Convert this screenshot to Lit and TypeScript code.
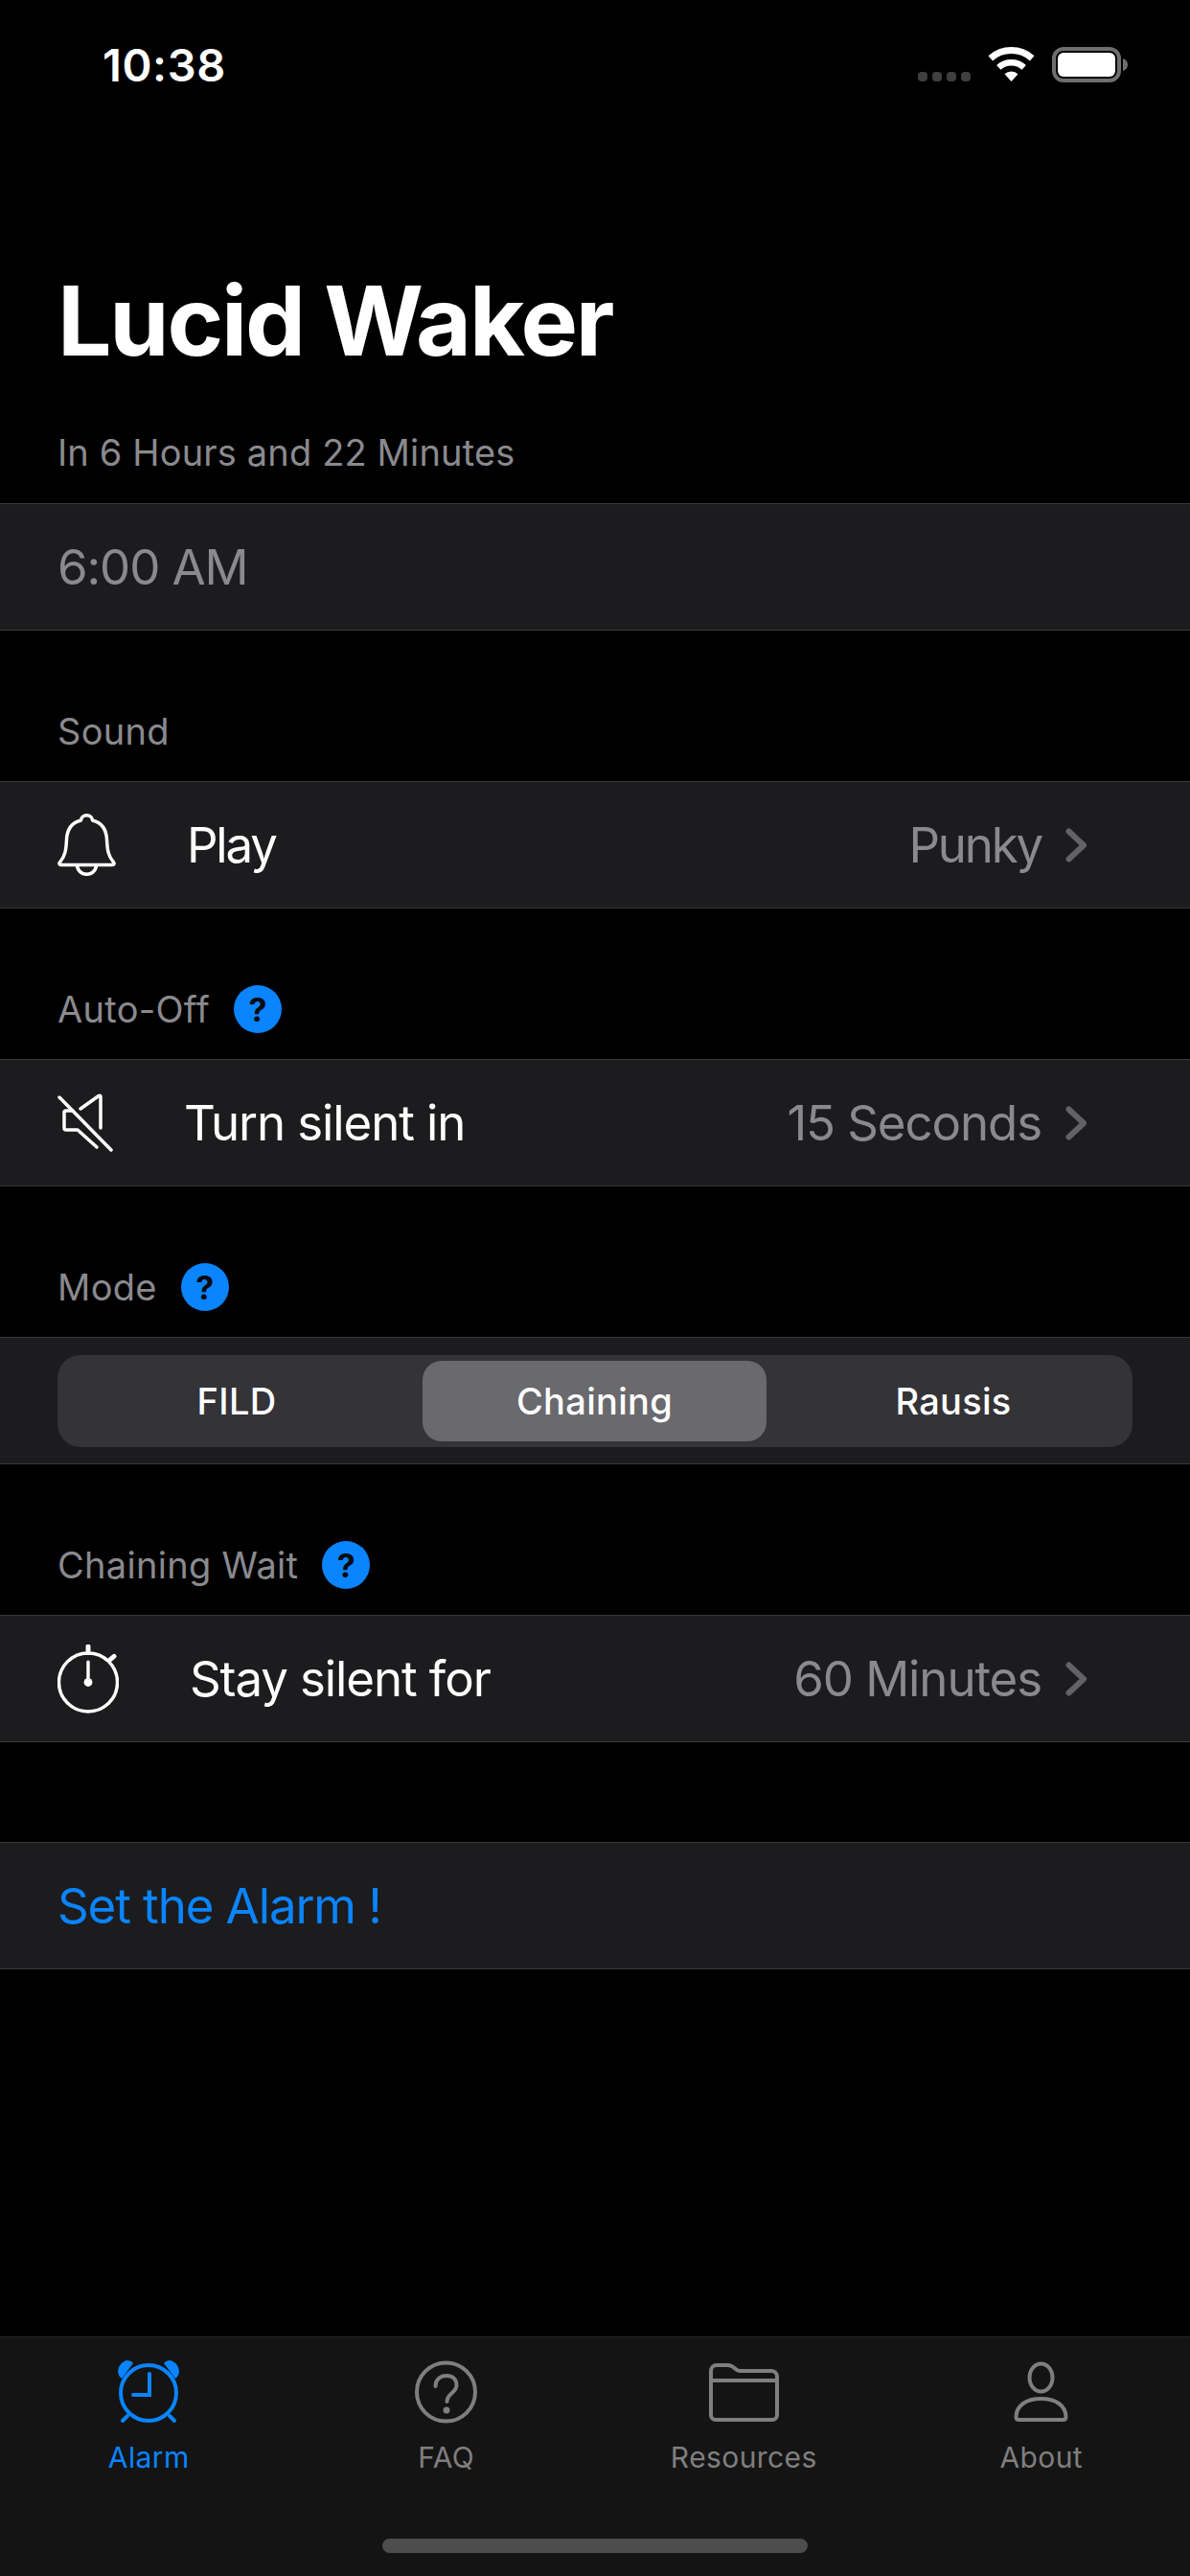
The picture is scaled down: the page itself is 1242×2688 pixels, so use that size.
import { LitElement, html, css, svg } from 'lit';
import { customElement } from 'lit/decorators.js';

const bell = html`<svg class="ico" width="61" height="65" viewBox="0 0 61 65"><g fill="none" stroke="#fff" stroke-width="3.5" stroke-linejoin="round">
  <path d="M30.5 1.8c-3.4 0-5.8 2.4-6 5.2C14.500 9.500 10 17 9.500 27 9 38 8 44 3 50c-1.800 2-1.300 3.500 1 3.500h53c2.300 0 2.800-1.500 1-3.500-5-6-6-12-6.500-23C51 17 46.500 9.500 36.500 7c-.2-2.800-2.600-5.200-6-5.200z"/>
  <path d="M20.500 54c.5 5.800 5 9.300 10 9.300s9.500-3.500 10-9.300"/></g></svg>`;

const mute = html`<svg class="ico" width="58" height="61" viewBox="0 0 58 61"><g fill="none" stroke="#fff" stroke-width="3.500" stroke-linecap="round" stroke-linejoin="round">
  <path d="M2 4l54 55"/>
  <path d="M16 18H9q-2 0-2 2v16q0 2 2 2h12l20 18"/>
  <path d="M24 16L43 2.500q2-1 2 1V36"/></g></svg>`;

const watch = html`<svg class="ico" width="64" height="72" viewBox="0 0 65 72"><g fill="none" stroke="#fff" stroke-width="3.500" stroke-linecap="round">
  <circle cx="32.500" cy="39.500" r="31"/>
  <path d="M32.500 1.500V8" stroke-width="5"/>
  <path d="M55 16l5-4" stroke-width="5"/>
  <path d="M32.500 18V38"/></g><circle cx="32.500" cy="39.500" r="4.500" fill="#fff"/></svg>`;

const tabIcons = {
  alarm: svg`<g fill="none" stroke="#0a84ff" stroke-width="4" stroke-linecap="round">
    <circle cx="36" cy="37" r="29"/>
    <path d="M37 17V39H20"/><path d="M14 61l-5 5"/><path d="M58 61l5 5"/></g>
    <path d="M8 22C1 17 4 6 13 3c3 0 6 1 7 3z" fill="#0a84ff"/>
    <path d="M64 22C71 17 68 6 59 3c-3 0-6 1-7 3z" fill="#0a84ff"/>`,
  faq: svg`<circle cx="36.500" cy="36" r="30.500" fill="none" stroke="#7f7f7f" stroke-width="4"/>
    <path d="M25.500 30c0-7 5-11 11.500-11s10.500 4 10.500 10c0 8-10 8-10 17" fill="none" stroke="#7f7f7f" stroke-width="4" stroke-linecap="round"/>
    <circle cx="37" cy="55" r="3.500" fill="#7f7f7f"/>`,
  folder: svg`<g fill="none" stroke="#7f7f7f" stroke-width="4" stroke-linejoin="round">
    <path d="M2 14a6 6 0 0 1 6-6h12c6 0 7 5.500 12 6h33a6 6 0 0 1 6 6v40a5 5 0 0 1-5 5H7a5 5 0 0 1-5-5z"/>
    <path d="M2 24h69"/></g>`,
  person: svg`<g fill="none" stroke="#7f7f7f" stroke-width="4" stroke-linejoin="round">
    <ellipse cx="36.500" cy="21" rx="12" ry="14.500"/>
    <path d="M10.500 62c0-12 11-19 26-19s26 7 26 19c0 2-1 3-3 3h-46c-2 0-3-1-3-3z"/></g>`,
};

@customElement('app-root')
export class AppRoot extends LitElement {
  static styles = css`
    :host {
      display: block;
      width: 1242px;
      height: 2688px;
      background: #000;
      color: #fff;
      font-family: Inter, 'Liberation Sans', sans-serif;
    }

    .page {
      display: flex;
      flex-direction: column;
      height: 100%;
    }

    .status {
      display: flex;
      align-items: flex-start;
      height: 140px;
      padding: 49px 65px 0 107px;
      box-sizing: border-box;
    }

    .time {
      font-size: 47px;
      line-height: 37px;
      font-weight: 600;
      letter-spacing: 0.6px;
      margin-right: auto;
    }

    .title {
      margin: 135px 0 0;
      padding: 0 60px;
      font-size: 100px;
      line-height: 120px;
      font-weight: 700;
      letter-spacing: -2.2px;
    }

    .subtitle {
      font-size: 38px;
      line-height: 46px;
      letter-spacing: 0.15px;
      color: #8a8a8e;
      padding: 0 60px;
      margin: 54px 0 30px;
    }

    .row {
      display: flex;
      align-items: center;
      height: 133px;
      box-sizing: border-box;
      padding: 0 60px;
      background: #1c1c1e;
      border-top: 1px solid #38383a;
      border-bottom: 1px solid #38383a;
      font-size: 51px;
      letter-spacing: -1.1px;
    }

    .row .ico {
      margin-right: 74px;
      flex: none;
    }

    .tight {
      letter-spacing: -2.2px;
    }

    .value {
      margin-left: auto;
      color: #8a8a8e;
    }

    .chev {
      margin: 0 47px 0 25px;
      flex: none;
    }

    .muted {
      color: #8a8a8e;
    }

    .action {
      color: #0a84ff;
      margin-top: 104px;
    }

    .head {
      display: flex;
      align-items: center;
      gap: 25px;
      height: 50px;
      padding: 80px 60px 27px;
      font-size: 38px;
      letter-spacing: 0.3px;
      color: #8a8a8e;
    }

    .badge {
      width: 50px;
      height: 50px;
      border-radius: 50%;
      background: #0a84ff;
      color: #0b0b0b;
      display: flex;
      align-items: center;
      justify-content: center;
      font-size: 34px;
      font-weight: 700;
      letter-spacing: 0;
    }

    .seg {
      display: grid;
      grid-template-columns: repeat(3, 1fr);
      flex: 1;
      height: 96px;
      box-sizing: border-box;
      padding: 6px 0;
      background: #333338;
      border-radius: 24px;
      font-size: 38px;
      font-weight: 450;
      letter-spacing: 0.3px;
    }

    .seg div {
      display: flex;
      align-items: center;
      justify-content: center;
      border-radius: 20px;
    }

    .seg .on {
      margin: 0 8px 0 7px;
      background: #69696e;
    }

    .spacer {
      flex: 1;
    }

    .tabbar {
      display: flex;
      flex-direction: column;
      height: 250px;
      box-sizing: border-box;
      padding-top: 21px;
      background: #141414;
      border-top: 1px solid #262626;
    }

    .tabs {
      display: grid;
      grid-template-columns: repeat(4, 1fr);
    }

    .tab {
      display: flex;
      flex-direction: column;
      align-items: center;
      gap: 14px;
      font-size: 30px;
      line-height: 36px;
      letter-spacing: 0.4px;
      color: #7f7f7f;
    }

    .tab.active {
      color: #0a84ff;
    }

    .home {
      width: 444px;
      height: 15px;
      margin: auto auto 24px;
      border-radius: 8px;
      background: #4d4d4d;
    }
  `;

  private chevron() {
    return html`<svg class="chev" width="23" height="36" viewBox="0 0 23 36"><path d="M3.500 3.500L19 18 3.500 32.500" fill="none" stroke="#636366" stroke-width="6" stroke-linecap="round" stroke-linejoin="round"/></svg>`;
  }

  private head(label: string, help = true) {
    return html`<div class="head"><span>${label}</span>${help ? html`<span class="badge">?</span>` : null}</div>`;
  }

  private tab(label: string, icon: unknown, active = false) {
    return html`<div class="tab ${active ? 'active' : ''}">
      <svg width="73" height="72" viewBox="0 0 73 72">${icon}</svg>
      <span>${label}</span>
    </div>`;
  }

  render() {
    return html`
      <div class="page">
        <div class="status">
          <span class="time">10:38</span>
          <svg width="219" height="37" viewBox="0 0 219 37">
            <g fill="#3f3f3f">
              <rect x="0" y="26" width="10" height="10" rx="4"/><rect x="15" y="26" width="10" height="10" rx="4"/>
              <rect x="30" y="26" width="10" height="10" rx="4"/><rect x="45" y="26" width="10" height="10" rx="4"/>
            </g>
            <g transform="translate(74 0)" fill="none" stroke="#fff">
              <path d="M1.800 11.900A32.500 32.500 0 0 1 45.200 11.900" stroke-width="7"/>
              <path d="M10.300 21.300A19.750 19.750 0 0 1 36.700 21.300" stroke-width="6.500"/>
              <path d="M23.500 36L16.500 28.200A10.500 10.500 0 0 1 30.500 28.200Z" fill="#fff" stroke="none"/>
            </g>
            <rect x="142" y="2" width="68" height="33" rx="10" fill="none" stroke="#6e6e6e" stroke-width="4"/>
            <rect x="146" y="6" width="60" height="25" rx="6" fill="#fff"/>
            <path d="M214 12c3 1 5 3.500 5 6.500s-2 5.500-5 6.500z" fill="#6e6e6e"/>
          </svg>
        </div>

        <h1 class="title">Lucid Waker</h1>
        <div class="subtitle">In 6 Hours and 22 Minutes</div>
        <div class="row muted">6:00 AM</div>

        ${this.head('Sound', false)}
        <div class="row">${bell}<span class="tight">Play</span><span class="value tight">Punky</span>${this.chevron()}</div>

        ${this.head('Auto-Off')}
        <div class="row">${mute}<span>Turn silent in</span><span class="value">15 Seconds</span>${this.chevron()}</div>

        ${this.head('Mode')}
        <div class="row">
          <div class="seg"><div>FILD</div><div class="on">Chaining</div><div>Rausis</div></div>
        </div>

        ${this.head('Chaining Wait')}
        <div class="row">${watch}<span>Stay silent for</span><span class="value">60 Minutes</span>${this.chevron()}</div>

        <div class="row action">Set the Alarm !</div>

        <div class="spacer"></div>

        <div class="tabbar">
          <div class="tabs">
            ${this.tab('Alarm', tabIcons.alarm, true)}
            ${this.tab('FAQ', tabIcons.faq)}
            ${this.tab('Resources', tabIcons.folder)}
            ${this.tab('About', tabIcons.person)}
          </div>
          <div class="home"></div>
        </div>
      </div>
    `;
  }
}
